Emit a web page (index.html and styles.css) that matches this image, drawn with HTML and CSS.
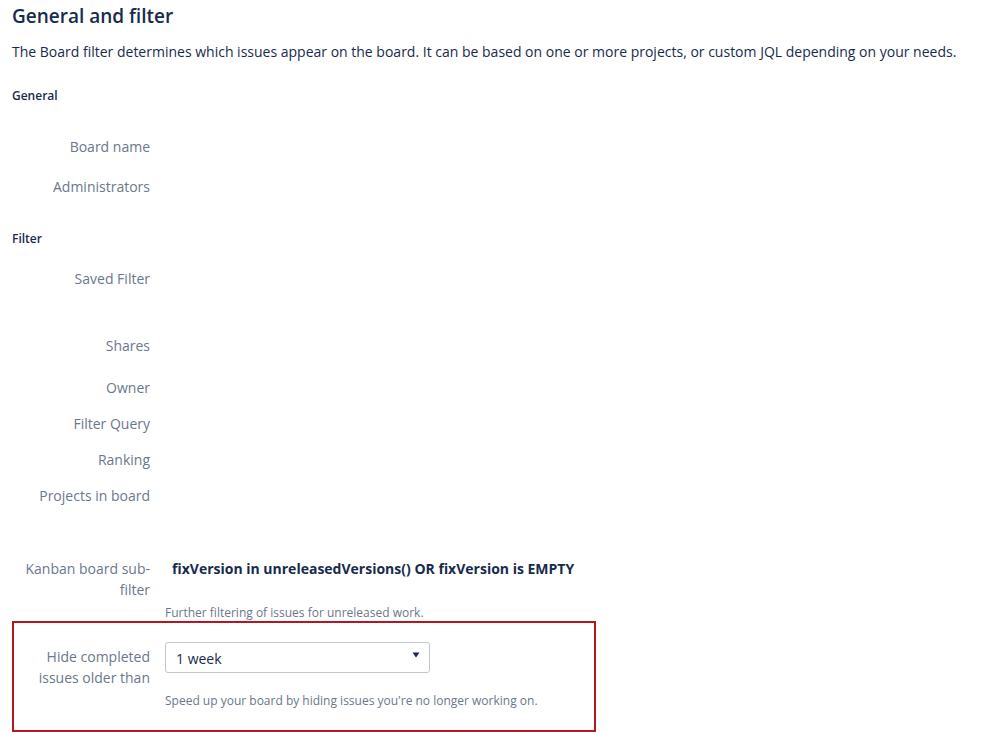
FILE: index.html
```html
<!DOCTYPE html>
<html lang="en">
<head>
<meta charset="utf-8">
<title>General and filter</title>
<link rel="stylesheet" href="styles.css">
</head>
<body>
<main class="page">
  <h1 class="title">General and filter</h1>
  <p class="intro">The Board filter determines which issues appear on the board. It can be based on one or more projects, or custom JQL depending on your needs.</p>

  <h2 class="section">General</h2>
  <div class="row row-board"><div class="label">Board name</div><div class="value"></div></div>
  <div class="row row-admins"><div class="label">Administrators</div><div class="value"></div></div>

  <h2 class="section section-filter">Filter</h2>
  <div class="row row-saved"><div class="label">Saved Filter</div><div class="value"></div></div>
  <div class="row row-shares"><div class="label">Shares</div><div class="value"></div></div>
  <div class="row row-std"><div class="label">Owner</div><div class="value"></div></div>
  <div class="row row-std"><div class="label">Filter Query</div><div class="value"></div></div>
  <div class="row row-std"><div class="label">Ranking</div><div class="value"></div></div>
  <div class="row row-projects"><div class="label">Projects in board</div><div class="value"></div></div>

  <div class="row row-sub">
    <div class="label">Kanban board sub-<br>filter</div>
    <div class="value">
      <div class="jql">fixVersion in unreleasedVersions() OR fixVersion is EMPTY</div>
      <div class="help help-sub">Further filtering of issues for unreleased work.</div>
    </div>
  </div>

  <div class="row row-hide">
    <div class="label label-hide">Hide completed issues older than</div>
    <div class="value">
      <div class="select">
        <span class="select-text">1 week</span>
        <svg class="select-arrow" width="8" height="6" viewBox="0 0 8 6"><path d="M0.5 0.5 H7.5 L4 5.5 Z" fill="#172b4d"/></svg>
      </div>
      <div class="help help-hide">Speed up your board by hiding issues you're no longer working on.</div>
    </div>
  </div>
</main>
</body>
</html>
```

FILE: styles.css
```css
html, body {
  margin: 0;
  padding: 0;
  background: #ffffff;
}

body {
  font-family: "Open Sans", "Noto Sans", sans-serif;
  color: #172b4d;
  font-size: 14px;
}

.page {
  padding: 0 0 0 12px;
}

.title {
  margin: 3px 0 0;
  font-size: 19px;
  line-height: 26px;
  font-weight: 600;
  color: #172b4d;
}

.intro {
  margin: 13px 0 0;
  font-size: 14px;
  line-height: 20px;
  color: #172b4d;
}

.section {
  margin: 26px 0 0;
  font-size: 12px;
  line-height: 16px;
  font-weight: 600;
  color: #172b4d;
}

.section-filter {
  margin-top: 14px;
}

.row {
  display: grid;
  grid-template-columns: 138px 1fr;
  column-gap: 15px;
  align-items: start;
}

.label {
  text-align: right;
  color: #6b778c;
  font-size: 14px;
  line-height: 20px;
}

.row-board { margin-top: 33px; height: 40px; }
.row-admins { height: 40px; }
.row-saved { margin-top: 22px; height: 67px; }
.row-shares { height: 42px; }
.row-std { height: 36px; }
.row-projects { height: 73px; }

.row-sub .label {
  line-height: 21px;
  margin-top: -1px;
}

.jql {
  padding-left: 7px;
  font-weight: 700;
  line-height: 20px;
  color: #172b4d;
}

.help {
  font-size: 12px;
  line-height: 16px;
  color: #6b778c;
}

.help-sub {
  margin-top: 26px;
}

.row-hide {
  margin-top: 0;
  width: 584px;
  height: 111px;
  box-sizing: border-box;
  border: 2px solid #b5171f;
  grid-template-columns: 136px 1fr;
  padding-top: 19px;
}

.label-hide {
  line-height: 21px;
  margin-top: 4px;
}

.select {
  width: 265px;
  height: 31px;
  box-sizing: border-box;
  border: 1px solid #c1c7d0;
  border-radius: 3px;
  display: flex;
  align-items: center;
  justify-content: space-between;
  padding: 2px 9px 0 10px;
  color: #172b4d;
}

.select-arrow {
  margin-top: -8px;
}

.help-hide {
  margin-top: 20px;
}
```
